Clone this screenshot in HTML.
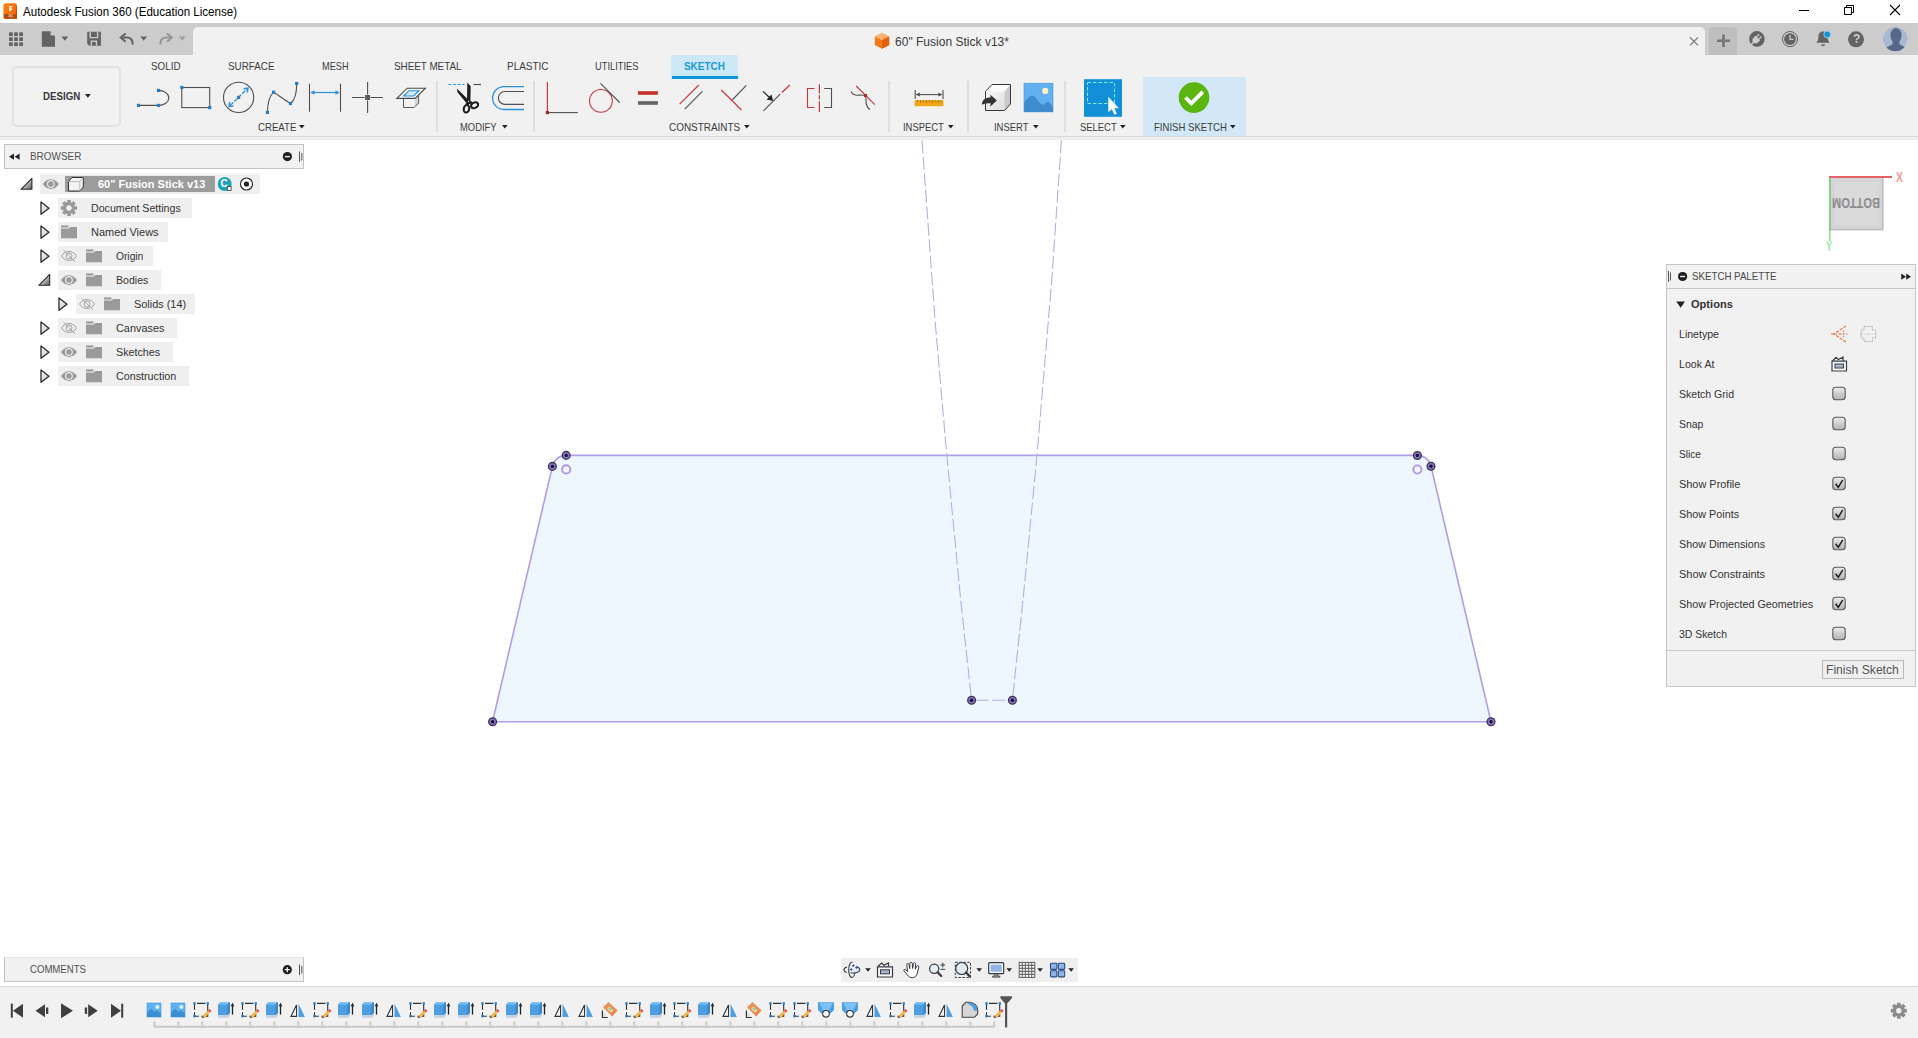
<!DOCTYPE html>
<html lang="en"><head><meta charset="utf-8"><title>Autodesk Fusion 360 (Education License)</title>
<style>
html,body{margin:0;padding:0;}
body{width:1918px;height:1038px;overflow:hidden;background:#fff;position:relative;font-family:"Liberation Sans",sans-serif;}
.b{position:absolute;box-sizing:border-box;display:block;}
.t{position:absolute;white-space:nowrap;font-family:"Liberation Sans",sans-serif;}
svg{overflow:visible;}
</style></head><body>
<div class="b" style="left:0px;top:23px;width:1918px;height:32px;background:#cccccc;"></div>
<div class="b" style="left:193px;top:27px;width:1512px;height:28px;background:#f1f1f1;border-radius:5px 5px 0 0;"></div>
<div class="b" style="left:1709px;top:27px;width:28px;height:28px;background:#bfbfbf;border-radius:4px 4px 0 0;"></div>
<div class="b" style="left:0px;top:55px;width:1918px;height:81px;background:#f1f1f1;"></div>
<div class="b" style="left:0px;top:136px;width:1918px;height:1px;background:#d9d9d9;"></div>
<div class="b" style="left:0px;top:137px;width:1918px;height:3px;background:#eeeeee;"></div>
<div class="b" style="left:0px;top:986px;width:1918px;height:52px;background:#f1f1f1;border-top:1px solid #d9d9d9;"></div>
<div class="t" style="left:23.10px;top:3.64px;font-size:12px;line-height:16px;color:#000;font-weight:400;transform:scaleX(0.9634);transform-origin:0 0;">Autodesk Fusion 360 (Education License)</div>
<div class="t" style="left:894.90px;top:33.64px;font-size:12px;line-height:16px;color:#3a3a3a;font-weight:400;transform:scaleX(1.0030);transform-origin:0 0;">60&quot; Fusion Stick v13*</div>
<div class="t" style="left:150.50px;top:58.69px;font-size:11px;line-height:15px;color:#3c3c3c;font-weight:400;transform:scaleX(0.8935);transform-origin:0 0;">SOLID</div>
<div class="t" style="left:228.30px;top:58.69px;font-size:11px;line-height:15px;color:#3c3c3c;font-weight:400;transform:scaleX(0.8950);transform-origin:0 0;">SURFACE</div>
<div class="t" style="left:321.50px;top:58.69px;font-size:11px;line-height:15px;color:#3c3c3c;font-weight:400;transform:scaleX(0.8338);transform-origin:0 0;">MESH</div>
<div class="t" style="left:394.40px;top:58.69px;font-size:11px;line-height:15px;color:#3c3c3c;font-weight:400;transform:scaleX(0.8953);transform-origin:0 0;">SHEET METAL</div>
<div class="t" style="left:507.30px;top:58.69px;font-size:11px;line-height:15px;color:#3c3c3c;font-weight:400;transform:scaleX(0.9052);transform-origin:0 0;">PLASTIC</div>
<div class="t" style="left:595.30px;top:58.69px;font-size:11px;line-height:15px;color:#3c3c3c;font-weight:400;transform:scaleX(0.8472);transform-origin:0 0;">UTILITIES</div>
<div class="b" style="left:671px;top:55px;width:67px;height:24px;background:#cde8f7;"></div>
<div class="b" style="left:672px;top:76px;width:66px;height:3px;background:#0a96d9;"></div>
<div class="t" style="left:684.00px;top:58.69px;font-size:11px;line-height:15px;color:#1b9ad6;font-weight:700;transform:scaleX(0.9023);transform-origin:0 0;">SKETCH</div>
<div class="b" style="left:1143px;top:77px;width:103px;height:59px;background:#d2e8f6;"></div>
<div class="b" style="left:11.5px;top:65.5px;width:109.5px;height:61px;border:2px solid #e2e2e2;border-radius:5px;background:#f2f2f2;"></div>
<div class="t" style="left:42.50px;top:88.99px;font-size:11px;line-height:15px;color:#3a3a3a;font-weight:700;transform:scaleX(0.8821);transform-origin:0 0;">DESIGN</div>
<div class="t" style="left:257.50px;top:119.69px;font-size:11px;line-height:15px;color:#3c3c3c;font-weight:400;transform:scaleX(0.8745);transform-origin:0 0;">CREATE</div>
<svg class="b" style="left:299px;top:124.5px;" width="6" height="4" viewBox="0 0 6 4"><path d="M0 0H5.6L2.8 3.6Z" fill="#222"/></svg>
<div class="t" style="left:460.40px;top:119.69px;font-size:11px;line-height:15px;color:#3c3c3c;font-weight:400;transform:scaleX(0.8555);transform-origin:0 0;">MODIFY</div>
<svg class="b" style="left:502.4px;top:124.5px;" width="6" height="4" viewBox="0 0 6 4"><path d="M0 0H5.6L2.8 3.6Z" fill="#222"/></svg>
<div class="t" style="left:669.40px;top:119.69px;font-size:11px;line-height:15px;color:#3c3c3c;font-weight:400;transform:scaleX(0.9031);transform-origin:0 0;">CONSTRAINTS</div>
<svg class="b" style="left:744.2px;top:124.5px;" width="6" height="4" viewBox="0 0 6 4"><path d="M0 0H5.6L2.8 3.6Z" fill="#222"/></svg>
<div class="t" style="left:903.20px;top:119.69px;font-size:11px;line-height:15px;color:#3c3c3c;font-weight:400;transform:scaleX(0.8538);transform-origin:0 0;">INSPECT</div>
<svg class="b" style="left:947.5px;top:124.5px;" width="6" height="4" viewBox="0 0 6 4"><path d="M0 0H5.6L2.8 3.6Z" fill="#222"/></svg>
<div class="t" style="left:994.40px;top:119.69px;font-size:11px;line-height:15px;color:#3c3c3c;font-weight:400;transform:scaleX(0.8570);transform-origin:0 0;">INSERT</div>
<svg class="b" style="left:1032.7px;top:124.5px;" width="6" height="4" viewBox="0 0 6 4"><path d="M0 0H5.6L2.8 3.6Z" fill="#222"/></svg>
<div class="t" style="left:1079.70px;top:119.69px;font-size:11px;line-height:15px;color:#3c3c3c;font-weight:400;transform:scaleX(0.8575);transform-origin:0 0;">SELECT</div>
<svg class="b" style="left:1120.3px;top:124.5px;" width="6" height="4" viewBox="0 0 6 4"><path d="M0 0H5.6L2.8 3.6Z" fill="#222"/></svg>
<div class="t" style="left:1153.60px;top:119.69px;font-size:11px;line-height:15px;color:#3c3c3c;font-weight:400;transform:scaleX(0.8694);transform-origin:0 0;">FINISH SKETCH</div>
<svg class="b" style="left:1230.3px;top:124.5px;" width="6" height="4" viewBox="0 0 6 4"><path d="M0 0H5.6L2.8 3.6Z" fill="#222"/></svg>
<svg class="b" style="left:84.5px;top:93.8px;" width="6" height="4" viewBox="0 0 6 4"><path d="M0 0H5.8L2.9 3.8Z" fill="#222"/></svg>
<div class="b" style="left:436px;top:81px;width:2px;height:51px;background:#dedede;"></div>
<div class="b" style="left:533px;top:81px;width:2px;height:51px;background:#dedede;"></div>
<div class="b" style="left:888px;top:81px;width:2px;height:51px;background:#dedede;"></div>
<div class="b" style="left:967px;top:81px;width:2px;height:51px;background:#dedede;"></div>
<div class="b" style="left:1064px;top:81px;width:2px;height:51px;background:#dedede;"></div>
<svg class="b" style="left:0px;top:0px;" width="1918" height="60" viewBox="0 0 1918 60"><defs><linearGradient id="gF" x1="0" y1="0" x2="1" y2="1"><stop offset="0" stop-color="#ff8212"/><stop offset="1" stop-color="#ee5e00"/></linearGradient></defs><path d="M6.200 3.200H15.200Q17 3.200 17 6V18.800H5Q3.400 18.800 3.400 17V6Q3.400 3.200 6.200 3.200Z" fill="url(#gF)"/><path d="M4 14H17V18.800H5Q4 18.800 4 17.500Z" fill="#b44a08"/><path d="M16.200 6.500L17 6V18.800H16.200Z" fill="#b85008"/><path d="M9.100 5.900h3.400v1.400h-1.900v1.300h1.700v1.300h-1.700v1.400H9.100z" fill="#fff6e0"/><text x="10.600" y="16.900" font-family="Liberation Sans, sans-serif" font-size="2.900" font-weight="700" fill="#f3d3bc" text-anchor="middle">360</text><rect x="9.0" y="32.2" width="3.8" height="3.8" rx="0.6" fill="#636363"/><rect x="14.1" y="32.2" width="3.8" height="3.8" rx="0.6" fill="#636363"/><rect x="19.2" y="32.2" width="3.8" height="3.8" rx="0.6" fill="#636363"/><rect x="9.0" y="37.2" width="3.8" height="3.8" rx="0.6" fill="#636363"/><rect x="14.1" y="37.2" width="3.8" height="3.8" rx="0.6" fill="#636363"/><rect x="19.2" y="37.2" width="3.8" height="3.8" rx="0.6" fill="#636363"/><rect x="9.0" y="42.3" width="3.8" height="3.8" rx="0.6" fill="#636363"/><rect x="14.1" y="42.3" width="3.8" height="3.8" rx="0.6" fill="#636363"/><rect x="19.2" y="42.3" width="3.8" height="3.8" rx="0.6" fill="#636363"/><path d="M41.8 31.2h8.4l4.8 4.8v10.7H41.8z" fill="#636363"/><path d="M50.6 31.2v4.4h4.4z" fill="#cccccc"/><path d="M51 31.6l3.6 3.6H51z" fill="#636363" opacity=".0"/><path d="M61.3 36.4h7l-3.5 4.4z" fill="#636363"/><path d="M87.200 31.700h13.700v14.100H89.400L87.200 43.600z" fill="#636363"/><path d="M90.200 31.700v5.900h7.400v-5.900" fill="none" stroke="#cccccc" stroke-width="1.400"/><path d="M91.300 45.800v-4.500h5.200v4.500" fill="none" stroke="#cccccc" stroke-width="1.400"/><path d="M121.3 37.6h5.4c3.6 0 6 2.6 6 6.9" fill="none" stroke="#636363" stroke-width="2"/><path d="M125.6 33.4l-4.9 4.2 4.9 4.2" fill="none" stroke="#636363" stroke-width="2"/><path d="M140.3 36.4h6.8l-3.4 4.4z" fill="#636363"/><path d="M170.9 37.6h-4.6c-3.6 0-6 2.6-6 6.9" fill="none" stroke="#969696" stroke-width="2"/><path d="M167 33.4l4.9 4.2-4.9 4.2" fill="none" stroke="#969696" stroke-width="2"/><path d="M178.9 36.4h6.8l-3.4 4.4z" fill="#a0a0a0"/><path d="M1799 10.5h10" stroke="#000" stroke-width="1"/><path d="M1844.5 7.5h7v7h-7zM1846.5 7.5v-2h7v7h-2" fill="none" stroke="#000" stroke-width="1"/><path d="M1890 5l10 10M1900 5l-10 10" stroke="#000" stroke-width="1.1"/><path d="M882 33l7.2 3.6v8.4l-7.2 3.8-7.2-3.8v-8.4z" fill="#f47a1a"/><path d="M882 33l7.2 3.6-7.2 3.6-7.2-3.6z" fill="#fbb272"/><path d="M882 40.2l7.2-3.6v8.4l-7.2 3.8z" fill="#e0600c"/><path d="M1690 37.4l8 8M1698 37.4l-8 8" stroke="#777" stroke-width="1.3"/><path d="M1717 40.8h13M1723.5 34.6v12.4" stroke="#777" stroke-width="2.6"/><circle cx="1756.900" cy="38.900" r="7.800" fill="#636363"/><g transform="rotate(45 1756.500 39.300)" fill="#cccccc"><path d="M1753.300 37.300h6.400v3.200a3.200 3.200 0 0 1-6.400 0z"/><rect x="1754.300" y="33.800" width="1.300" height="3.600"/><rect x="1757.400" y="33.800" width="1.300" height="3.600"/><rect x="1755.800" y="43" width="1.500" height="4.500"/></g><circle cx="1790" cy="39.1" r="7.6" fill="none" stroke="#636363" stroke-width="1"/><circle cx="1790" cy="39.1" r="5.900" fill="#636363"/><path d="M1790 35v4.400h3.600" fill="none" stroke="#ccc" stroke-width="1.2"/><path d="M1823 31.6c3.200 0 4.600 2.400 4.600 5.400 0 3 .8 4.400 2.200 5.800h-13.600c1.400-1.400 2.200-2.800 2.200-5.800 0-3 1.400-5.400 4.600-5.400z" fill="#636363"/><path d="M1821 44.400h4a2 1.800 0 0 1-4 0z" fill="#636363"/><circle cx="1827.200" cy="34.400" r="3.400" fill="#1590d8" stroke="#a8d4f0" stroke-width=".800"/><circle cx="1856" cy="39.300" r="8" fill="#636363"/><circle cx="1895.300" cy="39.100" r="12.200" fill="#a8b7d2"/><clipPath id="cav"><circle cx="1895.300" cy="39.100" r="12.200"/></clipPath><g clip-path="url(#cav)" fill="#566789"><ellipse cx="1896" cy="35.500" rx="5.600" ry="7.400"/><path d="M1884.500 52c1-5 5-6.500 8-7.500v-3h7v3c3 1 7 2.500 8 7.500z"/></g></svg>
<div class="t" style="left:1853.00px;top:31.44px;font-size:12px;line-height:16px;color:#cccccc;font-weight:700;">?</div>
<svg class="b" style="left:0px;top:0px;" width="1918" height="140" viewBox="0 0 1918 140"><path d="M138.5 105.4H158.500A10.300 7.500 0 0 0 158.500 90.400" fill="none" stroke="#505050" stroke-width="1.100"/><rect x="136.9" y="103.8" width="3.2" height="3.2" fill="#2a7cc0"/><rect x="156.9" y="103.8" width="3.2" height="3.2" fill="#2a7cc0"/><rect x="156.9" y="88.8" width="3.2" height="3.2" fill="#2a7cc0"/><rect x="181.800" y="87.500" width="27.900" height="20.100" fill="none" stroke="#505050" stroke-width="1.100"/><rect x="180.2" y="85.9" width="3.2" height="3.2" fill="#2a7cc0"/><rect x="208.1" y="106.0" width="3.2" height="3.2" fill="#2a7cc0"/><circle cx="238.600" cy="97.400" r="15.100" fill="none" stroke="#505050" stroke-width="1.100"/><path d="M230.300 105.400L246.800 89.300" stroke="#2b8fd9" stroke-width="1.400" stroke-dasharray="4 1.600"/><path d="M243.700 88.700L247.900 88.200L247.300 92.500M233.400 106L229.100 106.500L229.700 102.200" fill="none" stroke="#2b8fd9" stroke-width="1.500"/><rect x="237.0" y="95.8" width="3.2" height="3.2" fill="#2a7cc0"/><path d="M267.400 112.400C267.600 103 270 95.500 273.600 92.200C279 95.200 285 100.500 290.500 103.500C294.500 100.500 296.700 92 296.700 83.500" fill="none" stroke="#505050" stroke-width="1.100"/><rect x="265.8" y="110.8" width="3.2" height="3.2" fill="#2a7cc0"/><rect x="272.0" y="90.6" width="3.2" height="3.2" fill="#2a7cc0"/><rect x="288.9" y="101.9" width="3.2" height="3.2" fill="#2a7cc0"/><rect x="295.1" y="81.9" width="3.2" height="3.2" fill="#2a7cc0"/><path d="M309.500 83.700V111.700M340.500 83.700V111.700" stroke="#505050" stroke-width="1.100"/><path d="M311.500 92.500H338.500" stroke="#2b8fd9" stroke-width="1.200"/><path d="M310.300 92.500l4.200-2.200v4.400zM339.700 92.500l-4.200-2.200v4.400z" fill="#2b8fd9"/><path d="M352 97.500H364.500M370.700 97.500H383M367.600 82V94.400M367.600 100.600V113" stroke="#505050" stroke-width="1.100"/><rect x="365.1" y="95.0" width="5.0" height="5.0" fill="#5a5a5a"/><path d="M403.500 98.400V107.500H414.200V98.400Z" fill="#f2f2f2"/><path d="M414.200 107.500L418.800 103.300V95L414.200 98.400Z" fill="#d6d6d6"/><path d="M403.500 98.400V107.500H414.200L418.600 103V95" fill="none" stroke="#5a5a5a" stroke-width="1"/><path d="M414.200 107V98.400" stroke="#fafafa" stroke-width=".800"/><path d="M396.900 98.400L407.200 88.200H425.400L415.200 98.400Z" fill="#fafafa" stroke="#484848" stroke-width="1.100"/><path d="M403.700 96L408.900 90.700H419L413.900 96Z" fill="#cfe9fb" stroke="#2b8fd9" stroke-width="1.150"/><path d="M448.500 84.500H464.500" stroke="#2b8fd9" stroke-width="1.200" stroke-dasharray="3 1.600"/><path d="M473.500 84.500H481" stroke="#505050" stroke-width="1.100"/><path d="M467.300 82.600L470.700 86.300L470.400 100.800L468.600 105.400L465.600 104.600L467 100Z" fill="#1e1e1e"/><path d="M456.800 88.600L468.100 99.500L472.800 102.300L471 104.800L465.900 102.500L457.500 92.200Z" fill="#1e1e1e"/><ellipse cx="466.500" cy="108.800" rx="2.700" ry="3.800" fill="none" stroke="#1e1e1e" stroke-width="2.100" transform="rotate(12 466.500 108.800)"/><ellipse cx="474.600" cy="105.300" rx="3.700" ry="2.700" fill="none" stroke="#1e1e1e" stroke-width="2.100" transform="rotate(-28 474.600 105.300)"/><circle cx="468.500" cy="101.400" r=".700" fill="#e8e8e8"/><path d="M524 86.600H504.050A11.450 11.450 0 0 0 504.050 109.500H524" fill="none" stroke="#2b8fd9" stroke-width="1.300"/><path d="M524 91.500H504.850A6.450 6.450 0 0 0 504.850 104.400H524" fill="none" stroke="#505050" stroke-width="1.100"/><path d="M547.400 82V111" stroke="#c43a42" stroke-width="1.200"/><path d="M549 112.600H577.800" stroke="#505050" stroke-width="1.100"/><rect x="545.8" y="111.0" width="3.2" height="3.2" fill="#a02828"/><circle cx="600.900" cy="100.900" r="11.400" fill="none" stroke="#c43a42" stroke-width="1.100"/><path d="M600.400 83.400L619.700 102.500" stroke="#505050" stroke-width="1.100"/><rect x="638" y="91.200" width="19.900" height="3.600" fill="#c9302c"/><rect x="638" y="101.200" width="19.900" height="3.600" fill="#636363"/><path d="M679.600 104.200L698.800 85" stroke="#c43a42" stroke-width="1.200"/><path d="M684.800 109.200L702.300 91.400" stroke="#505050" stroke-width="1.100"/><path d="M721.300 90L741.500 110" stroke="#c43a42" stroke-width="1.200"/><path d="M732.200 100L746.300 85.400" stroke="#505050" stroke-width="1.100"/><path d="M763.500 110.900L780.200 94.200" stroke="#505050" stroke-width="1.100"/><path d="M781.900 92.500L789.900 85" stroke="#c43a42" stroke-width="1.300"/><path d="M763 91.400L770 98" stroke="#222" stroke-width="1.200"/><path d="M773.200 101L766.600 99.400L771.400 94.600Z" fill="#222"/><path d="M814.600 88.500H807.500V107.500H814.600" fill="none" stroke="#c43a42" stroke-width="1.100"/><path d="M824.100 88.500H831.500V107.500H824.100" fill="none" stroke="#505050" stroke-width="1.100"/><path d="M819.400 84.200V112" stroke="#c43a42" stroke-width="1.200" stroke-dasharray="9.200 1.800 4.400 1.600 11 0"/><path d="M851.100 91.500C852.500 94.800 855 95.200 857.500 95.200S862 94.600 865.300 95.500C866.800 98 865.500 101 866.300 104S868 108.600 869.900 109.400" fill="none" stroke="#505050" stroke-width="1.100"/><path d="M856.200 86L874.800 104.600" stroke="#c43a42" stroke-width="1.200"/><rect x="864.0" y="94.0" width="3.0" height="3.0" fill="#a82a34"/><path d="M915.200 90V99M943 90V99" stroke="#505050" stroke-width="1.100"/><path d="M916.500 94.600H941.500" stroke="#505050" stroke-width="1.100"/><path d="M915.800 94.600l4-2v4zM942.400 94.600l-4-2v4z" fill="#505050"/><rect x="914.700" y="100.200" width="28.700" height="6" fill="#f2a516"/><rect x="917.0" y="100.200" width="1" height="1.8" fill="#a86a08"/><rect x="920.0" y="100.200" width="1" height="2.6" fill="#a86a08"/><rect x="922.9" y="100.200" width="1" height="1.8" fill="#a86a08"/><rect x="925.9" y="100.200" width="1" height="2.6" fill="#a86a08"/><rect x="928.8" y="100.200" width="1" height="1.8" fill="#a86a08"/><rect x="931.8" y="100.200" width="1" height="2.6" fill="#a86a08"/><rect x="934.7" y="100.200" width="1" height="1.8" fill="#a86a08"/><rect x="937.6" y="100.200" width="1" height="2.6" fill="#a86a08"/><rect x="940.6" y="100.200" width="1" height="1.8" fill="#a86a08"/><defs><linearGradient id="gCubeF" x1="0" y1="0" x2="1" y2="1"><stop offset="0" stop-color="#f6f6f6"/><stop offset="1" stop-color="#dedede"/></linearGradient></defs><path d="M985.500 91.400H1004.500V110.500H985.500Z" fill="url(#gCubeF)"/><path d="M985.500 91.400L992 84.500H1010.500L1004.500 91.400Z" fill="#fbfbfb"/><path d="M1004.500 91.400L1010.500 84.500V104L1004.500 110.500Z" fill="#c9c9cd"/><path d="M985.500 91.400L992 84.500H1010.500V104L1004.500 110.500H985.500Z" fill="none" stroke="#3a3a3a" stroke-width="1" stroke-linejoin="round"/><path d="M981.800 104.800C982.500 99.500 985.500 97.600 990.500 97.600V94.800L996.900 100.600L990.500 106.400V103.200C987 103.200 984.500 103.200 981.800 104.800Z" fill="#333"/><rect x="1024" y="83.200" width="29" height="28.700" fill="#62b0f0"/><path d="M1024 102.500C1027 99 1029.500 95.400 1032.400 95.400C1036 95.400 1039.500 104.700 1043.200 104.700C1045 104.700 1046 101.800 1047.600 101.800C1049.500 101.800 1051.500 105 1053 107.500V111.900H1024Z" fill="#3f8ccc"/><circle cx="1045.200" cy="90.900" r="3.100" fill="#fdf3c4"/><rect x="1024" y="83.200" width="29" height="28.700" fill="none" stroke="#4a94d4" stroke-width=".600"/><rect x="1084" y="79.200" width="38" height="37.600" fill="#1190d8"/><rect x="1087.500" y="82.500" width="27" height="21" fill="none" stroke="#86ead8" stroke-width="1" stroke-dasharray="3.500 2"/><path d="M1108.300 96.800V112.300L1111.800 109.200L1114.400 114.700L1116.800 113.600L1114.300 108.200H1118.900Z" fill="#fff"/><circle cx="1194" cy="97.600" r="15.300" fill="#5bb511"/><path d="M1185.500 97.500L1191.300 103.300L1202.800 91.800" fill="none" stroke="#fff" stroke-width="3.800"/></svg>
<div class="b" style="left:4px;top:144px;width:300px;height:25px;background:#f1f1f1;border:1px solid #c3c3c3;"></div>
<div class="t" style="left:29.50px;top:148.69px;font-size:11px;line-height:15px;color:#505050;font-weight:400;transform:scaleX(0.9025);transform-origin:0 0;">BROWSER</div>
<div class="b" style="left:40px;top:174px;width:220px;height:20px;background:#efefef;"></div>
<div class="b" style="left:65px;top:176px;width:150px;height:16px;background:#9c9c9c;"></div>
<div class="b" style="left:58px;top:198px;width:134px;height:20px;background:#efefef;"></div>
<div class="t" style="left:91.20px;top:200.99px;font-size:11px;line-height:15px;color:#333;font-weight:400;transform:scaleX(0.9652);transform-origin:0 0;">Document Settings</div>
<div class="b" style="left:58px;top:222px;width:110px;height:20px;background:#efefef;"></div>
<div class="t" style="left:91.20px;top:224.99px;font-size:11px;line-height:15px;color:#333;font-weight:400;transform:scaleX(0.9992);transform-origin:0 0;">Named Views</div>
<div class="b" style="left:58px;top:246px;width:95px;height:20px;background:#efefef;"></div>
<div class="t" style="left:116.20px;top:248.99px;font-size:11px;line-height:15px;color:#333;font-weight:400;transform:scaleX(0.9304);transform-origin:0 0;">Origin</div>
<div class="b" style="left:58px;top:270px;width:103px;height:20px;background:#efefef;"></div>
<div class="t" style="left:116.20px;top:272.99px;font-size:11px;line-height:15px;color:#333;font-weight:400;transform:scaleX(0.9601);transform-origin:0 0;">Bodies</div>
<div class="b" style="left:76px;top:294px;width:119px;height:20px;background:#efefef;"></div>
<div class="t" style="left:134.20px;top:296.99px;font-size:11px;line-height:15px;color:#333;font-weight:400;transform:scaleX(0.9909);transform-origin:0 0;">Solids (14)</div>
<div class="b" style="left:58px;top:318px;width:119px;height:20px;background:#efefef;"></div>
<div class="t" style="left:116.20px;top:320.99px;font-size:11px;line-height:15px;color:#333;font-weight:400;transform:scaleX(0.9893);transform-origin:0 0;">Canvases</div>
<div class="b" style="left:58px;top:342px;width:115px;height:20px;background:#efefef;"></div>
<div class="t" style="left:116.20px;top:344.99px;font-size:11px;line-height:15px;color:#333;font-weight:400;transform:scaleX(0.9768);transform-origin:0 0;">Sketches</div>
<div class="b" style="left:58px;top:366px;width:130.5px;height:20px;background:#efefef;"></div>
<div class="t" style="left:116.20px;top:368.99px;font-size:11px;line-height:15px;color:#333;font-weight:400;transform:scaleX(0.9749);transform-origin:0 0;">Construction</div>
<svg class="b" style="left:0px;top:0px;" width="320" height="400" viewBox="0 0 320 400"><path d="M14 153.600V159.800L9 156.700ZM19.600 153.600V159.800L14.600 156.700Z" fill="#222"/><circle cx="287.400" cy="156.600" r="4.600" fill="#1e1e1e"/><rect x="284.900" y="155.900" width="5" height="1.400" fill="#f1f1f1"/><path d="M299.500 151.500V162M301.800 153V160.500" stroke="#555" stroke-width="1"/><defs><linearGradient id="gTri" x1="0" y1="0" x2="1" y2="1"><stop offset="0" stop-color="#fff"/><stop offset="1" stop-color="#bdbdbd"/></linearGradient><linearGradient id="gTri2" x1="0" y1="0" x2="1" y2="1"><stop offset=".3" stop-color="#e8e8e8"/><stop offset="1" stop-color="#555"/></linearGradient></defs><path d="M21.0 189.3H31.9V178.4Z" fill="url(#gTri2)" stroke="#2a2a2a" stroke-width="1.100" stroke-linejoin="round"/><path d="M42.8 184.0C46.8 177.5 54.8 177.5 58.8 184.0C54.8 190.5 46.8 190.5 42.8 184.0Z" fill="#9a9a9a"/><circle cx="50.8" cy="184.0" r="3.300" fill="none" stroke="#e4e4e4" stroke-width="1.300"/><path d="M68.500 181.500L72 177.500H83.300V187L79.800 191H68.500Z" fill="#f4f4f4" stroke="#333" stroke-width="1"/><path d="M68.500 181.500H79.800V191M79.800 181.500L83.300 177.500" fill="none" stroke="#bbb" stroke-width="1"/><circle cx="224.700" cy="184" r="7" fill="#1ba3b8"/><rect x="227.300" y="186.600" width="3.800" height="3.800" fill="#fff" stroke="#333" stroke-width=".800"/><circle cx="246.500" cy="184" r="6" fill="#fff" stroke="#222" stroke-width="1.100"/><circle cx="246.500" cy="184" r="2.600" fill="#222"/><path d="M41.0 202.0L49.0 208.2L41.0 214.3Z" fill="url(#gTri)" stroke="#2a2a2a" stroke-width="1.300" stroke-linejoin="round"/><rect x="67.2" y="200.0" width="3.600" height="4" fill="#9a9a9a" transform="rotate(0 69.0 208.0)"/><rect x="67.2" y="200.0" width="3.600" height="4" fill="#9a9a9a" transform="rotate(45 69.0 208.0)"/><rect x="67.2" y="200.0" width="3.600" height="4" fill="#9a9a9a" transform="rotate(90 69.0 208.0)"/><rect x="67.2" y="200.0" width="3.600" height="4" fill="#9a9a9a" transform="rotate(135 69.0 208.0)"/><rect x="67.2" y="200.0" width="3.600" height="4" fill="#9a9a9a" transform="rotate(180 69.0 208.0)"/><rect x="67.2" y="200.0" width="3.600" height="4" fill="#9a9a9a" transform="rotate(225 69.0 208.0)"/><rect x="67.2" y="200.0" width="3.600" height="4" fill="#9a9a9a" transform="rotate(270 69.0 208.0)"/><rect x="67.2" y="200.0" width="3.600" height="4" fill="#9a9a9a" transform="rotate(315 69.0 208.0)"/><circle cx="69.0" cy="208.0" r="4.400" fill="none" stroke="#9a9a9a" stroke-width="3.400"/><path d="M41.0 226.0L49.0 232.2L41.0 238.3Z" fill="url(#gTri)" stroke="#2a2a2a" stroke-width="1.300" stroke-linejoin="round"/><path d="M61.0 225.4h7.400v2.100h-7.400z" fill="#9a9a9a"/><path d="M61.0 228.5h7.700l1.500-1.500h6.800v11.200h-16z" fill="#9a9a9a"/><path d="M41.0 250.0L49.0 256.2L41.0 262.3Z" fill="url(#gTri)" stroke="#2a2a2a" stroke-width="1.300" stroke-linejoin="round"/><path d="M61.5 256.0C65.0 250.0 73.0 250.0 76.5 256.0C73.0 262.0 65.0 262.0 61.5 256.0Z" fill="none" stroke="#a4a4a4" stroke-width="1"/><circle cx="69.0" cy="256.0" r="3" fill="none" stroke="#a4a4a4" stroke-width="1"/><path d="M64.0 250.5L75.0 262.0" stroke="#a4a4a4" stroke-width="1"/><path d="M86.0 249.4h7.400v2.100h-7.400z" fill="#9a9a9a"/><path d="M86.0 252.5h7.700l1.500-1.500h6.800v11.200h-16z" fill="#9a9a9a"/><path d="M38.8 285.3H49.7V274.4Z" fill="url(#gTri2)" stroke="#2a2a2a" stroke-width="1.100" stroke-linejoin="round"/><path d="M61.0 280.0C65.0 273.5 73.0 273.5 77.0 280.0C73.0 286.5 65.0 286.5 61.0 280.0Z" fill="#9a9a9a"/><circle cx="69.0" cy="280.0" r="3.300" fill="none" stroke="#e4e4e4" stroke-width="1.300"/><path d="M86.0 273.4h7.400v2.100h-7.400z" fill="#9a9a9a"/><path d="M86.0 276.5h7.700l1.500-1.500h6.800v11.200h-16z" fill="#9a9a9a"/><path d="M59.0 298.0L67.0 304.2L59.0 310.3Z" fill="url(#gTri)" stroke="#2a2a2a" stroke-width="1.300" stroke-linejoin="round"/><path d="M79.5 304.0C83.0 298.0 91.0 298.0 94.5 304.0C91.0 310.0 83.0 310.0 79.5 304.0Z" fill="none" stroke="#a4a4a4" stroke-width="1"/><circle cx="87.0" cy="304.0" r="3" fill="none" stroke="#a4a4a4" stroke-width="1"/><path d="M82.0 298.5L93.0 310.0" stroke="#a4a4a4" stroke-width="1"/><path d="M104.0 297.4h7.400v2.100h-7.400z" fill="#9a9a9a"/><path d="M104.0 300.5h7.700l1.500-1.500h6.800v11.200h-16z" fill="#9a9a9a"/><path d="M41.0 322.0L49.0 328.2L41.0 334.3Z" fill="url(#gTri)" stroke="#2a2a2a" stroke-width="1.300" stroke-linejoin="round"/><path d="M61.5 328.0C65.0 322.0 73.0 322.0 76.5 328.0C73.0 334.0 65.0 334.0 61.5 328.0Z" fill="none" stroke="#a4a4a4" stroke-width="1"/><circle cx="69.0" cy="328.0" r="3" fill="none" stroke="#a4a4a4" stroke-width="1"/><path d="M64.0 322.5L75.0 334.0" stroke="#a4a4a4" stroke-width="1"/><path d="M86.0 321.4h7.400v2.100h-7.400z" fill="#9a9a9a"/><path d="M86.0 324.5h7.700l1.500-1.500h6.800v11.200h-16z" fill="#9a9a9a"/><path d="M41.0 346.0L49.0 352.2L41.0 358.3Z" fill="url(#gTri)" stroke="#2a2a2a" stroke-width="1.300" stroke-linejoin="round"/><path d="M61.0 352.0C65.0 345.5 73.0 345.5 77.0 352.0C73.0 358.5 65.0 358.5 61.0 352.0Z" fill="#9a9a9a"/><circle cx="69.0" cy="352.0" r="3.300" fill="none" stroke="#e4e4e4" stroke-width="1.300"/><path d="M86.0 345.4h7.400v2.100h-7.400z" fill="#9a9a9a"/><path d="M86.0 348.5h7.700l1.500-1.500h6.800v11.200h-16z" fill="#9a9a9a"/><path d="M41.0 370.0L49.0 376.2L41.0 382.3Z" fill="url(#gTri)" stroke="#2a2a2a" stroke-width="1.300" stroke-linejoin="round"/><path d="M61.0 376.0C65.0 369.5 73.0 369.5 77.0 376.0C73.0 382.5 65.0 382.5 61.0 376.0Z" fill="#9a9a9a"/><circle cx="69.0" cy="376.0" r="3.300" fill="none" stroke="#e4e4e4" stroke-width="1.300"/><path d="M86.0 369.4h7.400v2.100h-7.400z" fill="#9a9a9a"/><path d="M86.0 372.5h7.700l1.500-1.500h6.800v11.200h-16z" fill="#9a9a9a"/></svg>
<div class="t" style="left:98.30px;top:176.69px;font-size:11px;line-height:15px;color:#fff;font-weight:700;transform:scaleX(0.9999);transform-origin:0 0;">60&quot; Fusion Stick v13</div>
<div class="t" style="left:220.60px;top:177.34px;font-size:10px;line-height:14px;color:#fff;font-weight:700;">C</div>
<svg class="b" style="left:0px;top:0px;" width="1918" height="1038" viewBox="0 0 1918 1038"><path d="M492.500 721.800L552.400 466.400A14 14 0 0 1 566.200 455.400H1417.400A14 14 0 0 1 1431 466.300L1491 721.800Z" fill="#eff7fe" stroke="#b09ee4" stroke-width="1.600" stroke-linejoin="round"/><path d="M922 140.500L932.100 280L935 320L946.800 455.300L960.700 600L971.600 700.250" fill="none" stroke="#b5b0dc" stroke-width="1.100" stroke-dasharray="13 3.500"/><path d="M1061.400 140.500L1051.800 280L1048.400 320L1037 455.300L1023 600L1012.400 700.250" fill="none" stroke="#b5b0dc" stroke-width="1.100" stroke-dasharray="13 3.500"/><path d="M971.600 700.250H1012.400" stroke="#b5b0dc" stroke-width="1.100" stroke-dasharray="13 3.500" stroke-dashoffset="-4"/><circle cx="566.20" cy="469.40" r="4.100" fill="#f8f4ff" stroke="#ab96ea" stroke-width="1.900"/><circle cx="1417.40" cy="469.50" r="4.100" fill="#f8f4ff" stroke="#ab96ea" stroke-width="1.900"/><circle cx="492.60" cy="721.80" r="3.900" fill="#8774c2" stroke="#3c3450" stroke-width="1.300"/><circle cx="492.60" cy="721.80" r="1.700" fill="#1c0c38"/><circle cx="1491.00" cy="721.80" r="3.900" fill="#8774c2" stroke="#3c3450" stroke-width="1.300"/><circle cx="1491.00" cy="721.80" r="1.700" fill="#1c0c38"/><circle cx="552.40" cy="466.40" r="3.900" fill="#8774c2" stroke="#3c3450" stroke-width="1.300"/><circle cx="552.40" cy="466.40" r="1.700" fill="#1c0c38"/><circle cx="566.20" cy="455.40" r="3.900" fill="#8774c2" stroke="#3c3450" stroke-width="1.300"/><circle cx="566.20" cy="455.40" r="1.700" fill="#1c0c38"/><circle cx="1417.40" cy="455.50" r="3.900" fill="#8774c2" stroke="#3c3450" stroke-width="1.300"/><circle cx="1417.40" cy="455.50" r="1.700" fill="#1c0c38"/><circle cx="1431.00" cy="466.30" r="3.900" fill="#8774c2" stroke="#3c3450" stroke-width="1.300"/><circle cx="1431.00" cy="466.30" r="1.700" fill="#1c0c38"/><circle cx="971.60" cy="700.25" r="3.900" fill="#8774c2" stroke="#3c3450" stroke-width="1.300"/><circle cx="971.60" cy="700.25" r="1.700" fill="#1c0c38"/><circle cx="1012.40" cy="700.25" r="3.900" fill="#8774c2" stroke="#3c3450" stroke-width="1.300"/><circle cx="1012.40" cy="700.25" r="1.700" fill="#1c0c38"/></svg>
<svg class="b" style="left:0px;top:0px;" width="1918" height="260" viewBox="0 0 1918 260"><rect x="1830.500" y="177" width="52.500" height="52.800" fill="#d5d5d5" stroke="#a9a9a9" stroke-width="1"/><rect x="1835" y="182" width="43.500" height="43" fill="#dadada"/><path d="M1829.700 177V241" stroke="#76e086" stroke-width="1.400"/><path d="M1829 177H1892" stroke="#e26464" stroke-width="1.800"/></svg>
<div class="t" style="left:1896.00px;top:167.75px;font-size:14px;line-height:18px;color:#f09a9a;font-weight:700;transform:scaleX(0.7492);transform-origin:0 0;">X</div>
<div class="t" style="left:1826.40px;top:237.45px;font-size:14px;line-height:18px;color:#98eca8;font-weight:700;transform:scaleX(0.6635);transform-origin:0 0;">Y</div>
<div class="t" style="left:1832.400px;top:195px;width:48px;height:16px;font-size:14px;line-height:16px;color:#8c8c8c;font-weight:700;transform:rotate(180deg);"><span style="display:inline-block;transform:scaleX(0.7947);transform-origin:0 0;">BOTTOM</span></div>
<div class="b" style="left:1666px;top:264px;width:250px;height:423px;background:#f1f1f1;border:1px solid #c6c6c6;"></div>
<div class="b" style="left:1667px;top:288px;width:248px;height:1px;background:#c6c6c6;"></div>
<div class="b" style="left:1667px;top:650px;width:248px;height:1px;background:#c6c6c6;"></div>
<div class="t" style="left:1691.60px;top:268.99px;font-size:11px;line-height:15px;color:#484848;font-weight:400;transform:scaleX(0.8834);transform-origin:0 0;">SKETCH PALETTE</div>
<div class="t" style="left:1691.30px;top:297.49px;font-size:11px;line-height:15px;color:#333;font-weight:700;transform:scaleX(1.0061);transform-origin:0 0;">Options</div>
<div class="t" style="left:1679.10px;top:326.69px;font-size:11px;line-height:15px;color:#333;font-weight:400;transform:scaleX(0.9617);transform-origin:0 0;">Linetype</div>
<div class="t" style="left:1679.10px;top:356.69px;font-size:11px;line-height:15px;color:#333;font-weight:400;transform:scaleX(0.9672);transform-origin:0 0;">Look At</div>
<div class="t" style="left:1679.10px;top:386.69px;font-size:11px;line-height:15px;color:#333;font-weight:400;transform:scaleX(0.9570);transform-origin:0 0;">Sketch Grid</div>
<div class="t" style="left:1679.10px;top:416.69px;font-size:11px;line-height:15px;color:#333;font-weight:400;transform:scaleX(0.9460);transform-origin:0 0;">Snap</div>
<div class="t" style="left:1679.10px;top:446.69px;font-size:11px;line-height:15px;color:#333;font-weight:400;transform:scaleX(0.9227);transform-origin:0 0;">Slice</div>
<div class="t" style="left:1679.10px;top:476.69px;font-size:11px;line-height:15px;color:#333;font-weight:400;transform:scaleX(0.9927);transform-origin:0 0;">Show Profile</div>
<div class="t" style="left:1679.10px;top:506.69px;font-size:11px;line-height:15px;color:#333;font-weight:400;transform:scaleX(0.9830);transform-origin:0 0;">Show Points</div>
<div class="t" style="left:1679.10px;top:536.69px;font-size:11px;line-height:15px;color:#333;font-weight:400;transform:scaleX(0.9781);transform-origin:0 0;">Show Dimensions</div>
<div class="t" style="left:1679.10px;top:566.69px;font-size:11px;line-height:15px;color:#333;font-weight:400;transform:scaleX(0.9988);transform-origin:0 0;">Show Constraints</div>
<div class="t" style="left:1679.10px;top:596.69px;font-size:11px;line-height:15px;color:#333;font-weight:400;transform:scaleX(0.9792);transform-origin:0 0;">Show Projected Geometries</div>
<div class="t" style="left:1679.10px;top:626.69px;font-size:11px;line-height:15px;color:#333;font-weight:400;transform:scaleX(0.9458);transform-origin:0 0;">3D Sketch</div>
<svg class="b" style="left:0px;top:0px;" width="1918" height="700" viewBox="0 0 1918 700"><path d="M1668.500 271V282M1670.500 272.500V280.500" stroke="#555" stroke-width="1"/><circle cx="1682.600" cy="276.500" r="4.600" fill="#1e1e1e"/><rect x="1680.100" y="275.800" width="5" height="1.400" fill="#f1f1f1"/><path d="M1901.200 273.600V279.800L1906 276.700ZM1906.200 273.600V279.800L1911 276.700Z" fill="#222"/><path d="M1676.300 301.600H1685L1680.650 307.800Z" fill="#222"/><defs><linearGradient id="gCb" x1="0" y1="0" x2="0" y2="1"><stop offset="0" stop-color="#ececec"/><stop offset="1" stop-color="#b2b2b2"/></linearGradient></defs><rect x="1832.800" y="387.3" width="12.400" height="12.400" rx="3" fill="url(#gCb)" stroke="#5a5a5a" stroke-width="1.100"/><rect x="1832.800" y="417.3" width="12.400" height="12.400" rx="3" fill="url(#gCb)" stroke="#5a5a5a" stroke-width="1.100"/><rect x="1832.800" y="447.3" width="12.400" height="12.400" rx="3" fill="url(#gCb)" stroke="#5a5a5a" stroke-width="1.100"/><rect x="1832.800" y="477.3" width="12.400" height="12.400" rx="3" fill="url(#gCb)" stroke="#5a5a5a" stroke-width="1.100"/><path d="M1835.600 483.7L1838.300 487.2L1842.800 479.8" fill="none" stroke="#1a1a1a" stroke-width="1.400"/><rect x="1832.800" y="507.3" width="12.400" height="12.400" rx="3" fill="url(#gCb)" stroke="#5a5a5a" stroke-width="1.100"/><path d="M1835.600 513.7L1838.300 517.2L1842.800 509.8" fill="none" stroke="#1a1a1a" stroke-width="1.400"/><rect x="1832.800" y="537.3" width="12.400" height="12.400" rx="3" fill="url(#gCb)" stroke="#5a5a5a" stroke-width="1.100"/><path d="M1835.600 543.7L1838.300 547.2L1842.800 539.8" fill="none" stroke="#1a1a1a" stroke-width="1.400"/><rect x="1832.800" y="567.3" width="12.400" height="12.400" rx="3" fill="url(#gCb)" stroke="#5a5a5a" stroke-width="1.100"/><path d="M1835.600 573.7L1838.300 577.2L1842.800 569.8" fill="none" stroke="#1a1a1a" stroke-width="1.400"/><rect x="1832.800" y="597.3" width="12.400" height="12.400" rx="3" fill="url(#gCb)" stroke="#5a5a5a" stroke-width="1.100"/><path d="M1835.600 603.7L1838.300 607.2L1842.800 599.8" fill="none" stroke="#1a1a1a" stroke-width="1.400"/><rect x="1832.800" y="627.3" width="12.400" height="12.400" rx="3" fill="url(#gCb)" stroke="#5a5a5a" stroke-width="1.100"/><path d="M1831 334H1847.500" stroke="#e0703a" stroke-width="1" stroke-dasharray="3.500 1.500 1 1.500"/><path d="M1846 326L1834 334L1846 342" fill="none" stroke="#e0703a" stroke-width="1.100" stroke-dasharray="3 1.300"/><path d="M1843.500 330.500V337.500" stroke="#e0703a" stroke-width="1" stroke-dasharray="1.500 1"/><path d="M1864 326.500H1872.500V330H1875.500V338H1872.500V341.500H1864V338H1861V330H1864Z" fill="none" stroke="#b8b8b8" stroke-width="1" stroke-dasharray="2.600 .900"/><path d="M1860 334H1876.500" stroke="#c8c8c8" stroke-width="1" stroke-dasharray="3 1.500 1 1.500"/><path d="M1832 361.200H1846.500V371H1832Z" fill="#f6f6f6" stroke="#3a3f4a" stroke-width="1.200"/><rect x="1835" y="364" width="8.500" height="4" fill="#aab4cc" stroke="#3a3f4a" stroke-width="1"/><path d="M1832.500 361L1836 357.300L1838.500 359.500L1843 357V361" fill="none" stroke="#3a3f4a" stroke-width="1.200"/></svg>
<div class="b" style="left:1822px;top:660px;width:82px;height:19px;background:#efefef;border:1px solid #b9b9b9;"></div>
<div class="t" style="left:1826.40px;top:661.00px;font-size:13px;line-height:17px;color:#555;font-weight:400;transform:scaleX(0.9330);transform-origin:0 0;">Finish Sketch</div>
<div class="b" style="left:841px;top:958px;width:237px;height:24px;background:#efefef;"></div>
<svg class="b" style="left:0px;top:0px;" width="1918" height="1038" viewBox="0 0 1918 1038"><path d="M852.600 962.300C850.300 961.600 848.700 965 848.700 969.800C848.700 974.600 850.300 978.200 852.300 977.300C853.600 976.700 854.600 975 855 973" fill="none" stroke="#363a46" stroke-width="1.100"/><path d="M847 967C845 967.600 844 968.700 844 969.900C844 971 845 972 846.800 972.600" fill="none" stroke="#363a46" stroke-width="1.100"/><path d="M850.500 972.800C853 973.200 856 973 858 972C859.600 971.200 860.200 970 859.600 968.800C859 967.700 857.600 966.900 856.500 966.500" fill="#e4eefa" stroke="#363a46" stroke-width="1.100"/><path d="M852 965.600h2.600M853.300 964.300v2.600M855.200 967.600h2.400M856.400 966.400v2.400M850 969.500h2.600M851.300 968.200v2.600" stroke="#2a4a90" stroke-width=".900"/><path d="M865.2 968.200H870.8L868.0 971.800Z" fill="#222"/><path d="M877.500 966.800H892.500V977H877.500Z" fill="#f6f6f6" stroke="#363a46" stroke-width="1.200"/><rect x="880.500" y="969.800" width="9" height="4" fill="#aab4cc" stroke="#363a46" stroke-width="1"/><path d="M878 966.500L881.500 963L884 965.200L888.500 963V966.500" fill="none" stroke="#363a46" stroke-width="1.200"/><path d="M903.600 970.200L905.200 969.300L907.600 971.600L906.800 964.600C906.800 963 908.800 963 909 964.400L909.800 968.600L909.900 963.400C910 962 912.200 962 912.300 963.400L912.600 968.400L913.500 963.800C913.700 962.400 915.800 962.600 915.700 964.200L915.200 969.200L916.800 966.200C917.400 965 919.200 965.600 918.800 967.200L917.200 973.400C916.600 976 915 977.600 912.600 977.600C910 977.600 908.600 976.600 907.200 974.800Z" fill="#fff" stroke="#363a46" stroke-width="1" stroke-linejoin="round"/><circle cx="934.200" cy="968.800" r="4.600" fill="#e6f0f0" stroke="#363a46" stroke-width="1.200"/><path d="M937.500 972.200L941.300 976" stroke="#363a46" stroke-width="2.200" stroke-linecap="round"/><path d="M940.500 965h4.600M942.800 962.700v4.600M940.500 969.300h4.600" stroke="#363a46" stroke-width="1"/><rect x="955.300" y="962.300" width="15.200" height="15.200" fill="none" stroke="#363a46" stroke-width="1" stroke-dasharray="2.500 1.500"/><circle cx="961.700" cy="968.500" r="6" fill="#e0ecec" stroke="#363a46" stroke-width="1.200"/><path d="M966 972.500L970 976.500" stroke="#363a46" stroke-width="2.400" stroke-linecap="round"/><path d="M976.4 968.200H982.0L979.2 971.800Z" fill="#222"/><rect x="988.700" y="962.700" width="15" height="11" rx="1" fill="#f4f4f4" stroke="#363a46" stroke-width="1.200"/><rect x="990.700" y="964.700" width="11" height="7" fill="#8fb4e6"/><path d="M994.500 974V976H992.500V977.300H1000V976H998V974" fill="#888" stroke="#363a46" stroke-width=".600"/><path d="M1006.4 968.200H1012.0L1009.2 971.800Z" fill="#222"/><rect x="1019.200" y="962.400" width="15.600" height="15" fill="#fff" stroke="#5a5a5a" stroke-width="1"/><path d="M1022.3 962.400V977.400M1025.4 962.400V977.400M1028.6 962.400V977.400M1031.7 962.400V977.400M1019.200 965.4H1034.800M1019.200 968.4H1034.800M1019.200 971.4H1034.800M1019.200 974.4H1034.800" stroke="#6a6a6a" stroke-width="1.100"/><path d="M1037.3 968.200H1042.9L1040.1 971.800Z" fill="#222"/><rect x="1050.5" y="963.2" width="6.400" height="6.200" rx=".800" fill="#8fb4e6" stroke="#2c4a80" stroke-width="1.100"/><rect x="1058.3" y="963.2" width="6.400" height="6.200" rx=".800" fill="#8fb4e6" stroke="#2c4a80" stroke-width="1.100"/><rect x="1050.5" y="970.7" width="6.400" height="6.200" rx=".800" fill="#8fb4e6" stroke="#2c4a80" stroke-width="1.100"/><rect x="1058.3" y="970.7" width="6.400" height="6.200" rx=".800" fill="#8fb4e6" stroke="#2c4a80" stroke-width="1.100"/><path d="M1068.3 968.200H1073.9L1071.1 971.800Z" fill="#222"/></svg>
<div class="b" style="left:4px;top:957px;width:300px;height:25px;background:#f1f1f1;border:1px solid #c3c3c3;border-top-color:#e4e4e4;"></div>
<div class="t" style="left:29.70px;top:961.69px;font-size:11px;line-height:15px;color:#505050;font-weight:400;transform:scaleX(0.8713);transform-origin:0 0;">COMMENTS</div>
<svg class="b" style="left:0px;top:0px;" width="1918" height="1038" viewBox="0 0 1918 1038"><circle cx="287.300" cy="969.700" r="4.600" fill="#1e1e1e"/><path d="M284.800 969.700h5M287.300 967.200v5" stroke="#f1f1f1" stroke-width="1.300"/><path d="M299.500 964.500V975M301.800 966V973.500" stroke="#555" stroke-width="1"/><rect x="10.800" y="1003.700" width="2" height="14" fill="#3f3f3f"/><path d="M23 1003.700V1017.700L13 1010.700Z" fill="#3f3f3f"/><path d="M45 1004.200V1017.200L35.500 1010.700Z" fill="#3f3f3f"/><rect x="46" y="1007.500" width="2.300" height="6.400" fill="#3f3f3f"/><path d="M61 1003.300V1018.300L73 1010.800Z" fill="#3f3f3f"/><rect x="84.800" y="1007.500" width="2.300" height="6.400" fill="#3f3f3f"/><path d="M88.200 1004.200V1017.200L97.700 1010.700Z" fill="#3f3f3f"/><path d="M111 1003.700V1017.700L121 1010.700Z" fill="#3f3f3f"/><rect x="121.200" y="1003.700" width="2" height="14" fill="#3f3f3f"/><defs><linearGradient id="gApp" x1="0" y1="0" x2="1" y2="1"><stop offset="0" stop-color="#e0a264"/><stop offset="1" stop-color="#ee7c4c"/></linearGradient></defs><rect x="147.0" y="1003" width="14" height="14" fill="#5fb2f2"/><path d="M147.0 1013L151.0 1008.500L154.5 1012L157.0 1010L161.0 1013.500V1017H147.0Z" fill="#3a8ed2"/><circle cx="157.4" cy="1007" r="2" fill="#e8f6ff"/><rect x="147.0" y="1003" width="14" height="14" fill="none" stroke="#3f97dc" stroke-width=".600"/><rect x="171.0" y="1003" width="14" height="14" fill="#5fb2f2"/><path d="M171.0 1013L175.0 1008.500L178.5 1012L181.0 1010L185.0 1013.500V1017H171.0Z" fill="#3a8ed2"/><circle cx="181.4" cy="1007" r="2" fill="#e8f6ff"/><rect x="171.0" y="1003" width="14" height="14" fill="none" stroke="#3f97dc" stroke-width=".600"/><rect x="194.5" y="1003.400" width="13.200" height="12.800" fill="none" stroke="#333" stroke-width="1.100" stroke-dasharray="8.400 2.400" stroke-dashoffset="-2.400"/><rect x="193.3" y="1002.2" width="2.400" height="2.400" fill="#2b7fc6"/><rect x="206.5" y="1002.2" width="2.400" height="2.400" fill="#2b7fc6"/><rect x="193.3" y="1015.0" width="2.400" height="2.400" fill="#2b7fc6"/><path d="M208.2 1010.300L210.2 1012.300L205.0 1017.500L202.1 1018.200L203.0 1015.500Z" fill="#f3b648"/><path d="M209.5 1009L211.5 1011L210.0 1012.500L208.0 1010.500Z" fill="#e8474c"/><path d="M201.9 1018.200L204.3 1017.500L202.9 1016.500Z" fill="#333"/><path d="M218.0 1014.200H227.5L230.0 1012V1016L227.5 1017.800H218.0Z" fill="#c4d4e2"/><path d="M218.0 1004.500L220.5 1002H230.0V1012.500L227.5 1015H218.0Z" fill="#4f9fe0"/><path d="M218.0 1004.500L220.5 1002H230.0L227.5 1004.500Z" fill="#7cc0f4"/><path d="M227.5 1004.500L230.0 1002V1012.500L227.5 1015Z" fill="#3a86c8"/><path d="M232.5 1014.600V1004.500" stroke="#222" stroke-width="1.300"/><path d="M232.5 1002.800L234.3 1006.200H230.7Z" fill="#222"/><rect x="242.5" y="1003.400" width="13.200" height="12.800" fill="none" stroke="#333" stroke-width="1.100" stroke-dasharray="8.400 2.400" stroke-dashoffset="-2.400"/><rect x="241.3" y="1002.2" width="2.400" height="2.400" fill="#2b7fc6"/><rect x="254.5" y="1002.2" width="2.400" height="2.400" fill="#2b7fc6"/><rect x="241.3" y="1015.0" width="2.400" height="2.400" fill="#2b7fc6"/><path d="M256.2 1010.300L258.2 1012.300L253.0 1017.500L250.1 1018.200L251.0 1015.500Z" fill="#f3b648"/><path d="M257.5 1009L259.5 1011L258.0 1012.500L256.0 1010.500Z" fill="#e8474c"/><path d="M249.9 1018.200L252.3 1017.500L250.9 1016.500Z" fill="#333"/><path d="M266.0 1014.200H275.5L278.0 1012V1016L275.5 1017.800H266.0Z" fill="#c4d4e2"/><path d="M266.0 1004.500L268.5 1002H278.0V1012.500L275.5 1015H266.0Z" fill="#4f9fe0"/><path d="M266.0 1004.500L268.5 1002H278.0L275.5 1004.500Z" fill="#7cc0f4"/><path d="M275.5 1004.500L278.0 1002V1012.500L275.5 1015Z" fill="#3a86c8"/><path d="M280.5 1014.600V1004.500" stroke="#222" stroke-width="1.300"/><path d="M280.5 1002.800L282.3 1006.200H278.7Z" fill="#222"/><path d="M291.0 1016.400H296.5V1005Z" fill="#fff" stroke="#333" stroke-width="1.100"/><path d="M298.5 1003.800V1016.900H304.9Z" fill="#4f9fe0"/><rect x="314.5" y="1003.400" width="13.200" height="12.800" fill="none" stroke="#333" stroke-width="1.100" stroke-dasharray="8.400 2.400" stroke-dashoffset="-2.400"/><rect x="313.3" y="1002.2" width="2.400" height="2.400" fill="#2b7fc6"/><rect x="326.5" y="1002.2" width="2.400" height="2.400" fill="#2b7fc6"/><rect x="313.3" y="1015.0" width="2.400" height="2.400" fill="#2b7fc6"/><path d="M328.2 1010.300L330.2 1012.300L325.0 1017.500L322.1 1018.200L323.0 1015.500Z" fill="#f3b648"/><path d="M329.5 1009L331.5 1011L330.0 1012.500L328.0 1010.500Z" fill="#e8474c"/><path d="M321.9 1018.200L324.3 1017.500L322.9 1016.500Z" fill="#333"/><path d="M338.0 1014.200H347.5L350.0 1012V1016L347.5 1017.800H338.0Z" fill="#c4d4e2"/><path d="M338.0 1004.500L340.5 1002H350.0V1012.500L347.5 1015H338.0Z" fill="#4f9fe0"/><path d="M338.0 1004.500L340.5 1002H350.0L347.5 1004.500Z" fill="#7cc0f4"/><path d="M347.5 1004.500L350.0 1002V1012.500L347.5 1015Z" fill="#3a86c8"/><path d="M352.5 1014.600V1004.500" stroke="#222" stroke-width="1.300"/><path d="M352.5 1002.800L354.3 1006.200H350.7Z" fill="#222"/><path d="M362.0 1014.200H371.5L374.0 1012V1016L371.5 1017.800H362.0Z" fill="#c4d4e2"/><path d="M362.0 1004.500L364.5 1002H374.0V1012.500L371.5 1015H362.0Z" fill="#4f9fe0"/><path d="M362.0 1004.500L364.5 1002H374.0L371.5 1004.500Z" fill="#7cc0f4"/><path d="M371.5 1004.500L374.0 1002V1012.500L371.5 1015Z" fill="#3a86c8"/><path d="M376.5 1014.600V1004.500" stroke="#222" stroke-width="1.300"/><path d="M376.5 1002.800L378.3 1006.200H374.7Z" fill="#222"/><path d="M387.0 1016.400H392.5V1005Z" fill="#fff" stroke="#333" stroke-width="1.100"/><path d="M394.5 1003.800V1016.900H400.9Z" fill="#4f9fe0"/><rect x="410.5" y="1003.400" width="13.200" height="12.800" fill="none" stroke="#333" stroke-width="1.100" stroke-dasharray="8.400 2.400" stroke-dashoffset="-2.400"/><rect x="409.3" y="1002.2" width="2.400" height="2.400" fill="#2b7fc6"/><rect x="422.5" y="1002.2" width="2.400" height="2.400" fill="#2b7fc6"/><rect x="409.3" y="1015.0" width="2.400" height="2.400" fill="#2b7fc6"/><path d="M424.2 1010.300L426.2 1012.300L421.0 1017.500L418.1 1018.200L419.0 1015.500Z" fill="#f3b648"/><path d="M425.5 1009L427.5 1011L426.0 1012.500L424.0 1010.500Z" fill="#e8474c"/><path d="M417.9 1018.200L420.3 1017.500L418.9 1016.500Z" fill="#333"/><path d="M434.0 1014.200H443.5L446.0 1012V1016L443.5 1017.800H434.0Z" fill="#c4d4e2"/><path d="M434.0 1004.500L436.5 1002H446.0V1012.500L443.5 1015H434.0Z" fill="#4f9fe0"/><path d="M434.0 1004.500L436.5 1002H446.0L443.5 1004.500Z" fill="#7cc0f4"/><path d="M443.5 1004.500L446.0 1002V1012.500L443.5 1015Z" fill="#3a86c8"/><path d="M448.5 1014.600V1004.500" stroke="#222" stroke-width="1.300"/><path d="M448.5 1002.800L450.3 1006.200H446.7Z" fill="#222"/><path d="M458.0 1014.200H467.5L470.0 1012V1016L467.5 1017.800H458.0Z" fill="#c4d4e2"/><path d="M458.0 1004.500L460.5 1002H470.0V1012.500L467.5 1015H458.0Z" fill="#4f9fe0"/><path d="M458.0 1004.500L460.5 1002H470.0L467.5 1004.500Z" fill="#7cc0f4"/><path d="M467.5 1004.500L470.0 1002V1012.500L467.5 1015Z" fill="#3a86c8"/><path d="M472.5 1014.600V1004.500" stroke="#222" stroke-width="1.300"/><path d="M472.5 1002.800L474.3 1006.200H470.7Z" fill="#222"/><rect x="482.5" y="1003.400" width="13.200" height="12.800" fill="none" stroke="#333" stroke-width="1.100" stroke-dasharray="8.400 2.400" stroke-dashoffset="-2.400"/><rect x="481.3" y="1002.2" width="2.400" height="2.400" fill="#2b7fc6"/><rect x="494.5" y="1002.2" width="2.400" height="2.400" fill="#2b7fc6"/><rect x="481.3" y="1015.0" width="2.400" height="2.400" fill="#2b7fc6"/><path d="M496.2 1010.300L498.2 1012.300L493.0 1017.500L490.1 1018.200L491.0 1015.500Z" fill="#f3b648"/><path d="M497.5 1009L499.5 1011L498.0 1012.500L496.0 1010.500Z" fill="#e8474c"/><path d="M489.9 1018.200L492.3 1017.500L490.9 1016.500Z" fill="#333"/><path d="M506.0 1014.200H515.5L518.0 1012V1016L515.5 1017.800H506.0Z" fill="#c4d4e2"/><path d="M506.0 1004.500L508.5 1002H518.0V1012.500L515.5 1015H506.0Z" fill="#4f9fe0"/><path d="M506.0 1004.500L508.5 1002H518.0L515.5 1004.500Z" fill="#7cc0f4"/><path d="M515.5 1004.500L518.0 1002V1012.500L515.5 1015Z" fill="#3a86c8"/><path d="M520.5 1014.600V1004.500" stroke="#222" stroke-width="1.300"/><path d="M520.5 1002.800L522.3 1006.200H518.7Z" fill="#222"/><path d="M530.0 1014.200H539.5L542.0 1012V1016L539.5 1017.800H530.0Z" fill="#c4d4e2"/><path d="M530.0 1004.500L532.5 1002H542.0V1012.500L539.5 1015H530.0Z" fill="#4f9fe0"/><path d="M530.0 1004.500L532.5 1002H542.0L539.5 1004.500Z" fill="#7cc0f4"/><path d="M539.5 1004.500L542.0 1002V1012.500L539.5 1015Z" fill="#3a86c8"/><path d="M544.5 1014.600V1004.500" stroke="#222" stroke-width="1.300"/><path d="M544.5 1002.800L546.3 1006.200H542.7Z" fill="#222"/><path d="M555.0 1016.400H560.5V1005Z" fill="#fff" stroke="#333" stroke-width="1.100"/><path d="M562.5 1003.800V1016.900H568.9Z" fill="#4f9fe0"/><path d="M579.0 1016.400H584.5V1005Z" fill="#fff" stroke="#333" stroke-width="1.100"/><path d="M586.5 1003.800V1016.900H592.9Z" fill="#4f9fe0"/><path d="M602.4 1010.600V1017.500H607.7" fill="#e2e2e2" stroke="#333" stroke-width="1.200"/><path d="M608.6 1002L617.5 1010.600L612.2 1016.400L602.9 1007.300Z" fill="url(#gApp)"/><path d="M609.4 1006.600L613.3 1010.400L611.2 1012.600L607.3 1008.800Z" fill="#eef0c0"/><path d="M609.1 1008L611.7 1010.600" stroke="#3fa050" stroke-width="1.300" stroke-dasharray="1 .700"/><rect x="626.5" y="1003.400" width="13.200" height="12.800" fill="none" stroke="#333" stroke-width="1.100" stroke-dasharray="8.400 2.400" stroke-dashoffset="-2.400"/><rect x="625.3" y="1002.2" width="2.400" height="2.400" fill="#2b7fc6"/><rect x="638.5" y="1002.2" width="2.400" height="2.400" fill="#2b7fc6"/><rect x="625.3" y="1015.0" width="2.400" height="2.400" fill="#2b7fc6"/><path d="M640.2 1010.300L642.2 1012.300L637.0 1017.500L634.1 1018.200L635.0 1015.500Z" fill="#f3b648"/><path d="M641.5 1009L643.5 1011L642.0 1012.500L640.0 1010.500Z" fill="#e8474c"/><path d="M633.9 1018.200L636.3 1017.500L634.9 1016.500Z" fill="#333"/><path d="M650.0 1014.200H659.5L662.0 1012V1016L659.5 1017.800H650.0Z" fill="#c4d4e2"/><path d="M650.0 1004.500L652.5 1002H662.0V1012.500L659.5 1015H650.0Z" fill="#4f9fe0"/><path d="M650.0 1004.500L652.5 1002H662.0L659.5 1004.500Z" fill="#7cc0f4"/><path d="M659.5 1004.500L662.0 1002V1012.500L659.5 1015Z" fill="#3a86c8"/><path d="M664.5 1014.600V1004.500" stroke="#222" stroke-width="1.300"/><path d="M664.5 1002.800L666.3 1006.200H662.7Z" fill="#222"/><rect x="674.5" y="1003.400" width="13.200" height="12.800" fill="none" stroke="#333" stroke-width="1.100" stroke-dasharray="8.400 2.400" stroke-dashoffset="-2.400"/><rect x="673.3" y="1002.2" width="2.400" height="2.400" fill="#2b7fc6"/><rect x="686.5" y="1002.2" width="2.400" height="2.400" fill="#2b7fc6"/><rect x="673.3" y="1015.0" width="2.400" height="2.400" fill="#2b7fc6"/><path d="M688.2 1010.300L690.2 1012.300L685.0 1017.500L682.1 1018.200L683.0 1015.500Z" fill="#f3b648"/><path d="M689.5 1009L691.5 1011L690.0 1012.500L688.0 1010.500Z" fill="#e8474c"/><path d="M681.9 1018.200L684.3 1017.500L682.9 1016.500Z" fill="#333"/><path d="M698.0 1014.200H707.5L710.0 1012V1016L707.5 1017.800H698.0Z" fill="#c4d4e2"/><path d="M698.0 1004.500L700.5 1002H710.0V1012.500L707.5 1015H698.0Z" fill="#4f9fe0"/><path d="M698.0 1004.500L700.5 1002H710.0L707.5 1004.500Z" fill="#7cc0f4"/><path d="M707.5 1004.500L710.0 1002V1012.500L707.5 1015Z" fill="#3a86c8"/><path d="M712.5 1014.600V1004.500" stroke="#222" stroke-width="1.300"/><path d="M712.5 1002.800L714.3 1006.200H710.7Z" fill="#222"/><path d="M723.0 1016.400H728.5V1005Z" fill="#fff" stroke="#333" stroke-width="1.100"/><path d="M730.5 1003.800V1016.900H736.9Z" fill="#4f9fe0"/><path d="M746.4 1010.600V1017.500H751.7" fill="#e2e2e2" stroke="#333" stroke-width="1.200"/><path d="M752.6 1002L761.5 1010.600L756.2 1016.400L746.9 1007.300Z" fill="url(#gApp)"/><path d="M753.4 1006.600L757.3 1010.400L755.2 1012.600L751.3 1008.800Z" fill="#eef0c0"/><path d="M753.1 1008L755.7 1010.600" stroke="#3fa050" stroke-width="1.300" stroke-dasharray="1 .700"/><rect x="770.5" y="1003.400" width="13.200" height="12.800" fill="none" stroke="#333" stroke-width="1.100" stroke-dasharray="8.400 2.400" stroke-dashoffset="-2.400"/><rect x="769.3" y="1002.2" width="2.400" height="2.400" fill="#2b7fc6"/><rect x="782.5" y="1002.2" width="2.400" height="2.400" fill="#2b7fc6"/><rect x="769.3" y="1015.0" width="2.400" height="2.400" fill="#2b7fc6"/><path d="M784.2 1010.300L786.2 1012.300L781.0 1017.500L778.1 1018.200L779.0 1015.500Z" fill="#f3b648"/><path d="M785.5 1009L787.5 1011L786.0 1012.500L784.0 1010.500Z" fill="#e8474c"/><path d="M777.9 1018.200L780.3 1017.500L778.9 1016.500Z" fill="#333"/><rect x="794.5" y="1003.400" width="13.200" height="12.800" fill="none" stroke="#333" stroke-width="1.100" stroke-dasharray="8.400 2.400" stroke-dashoffset="-2.400"/><rect x="793.3" y="1002.2" width="2.400" height="2.400" fill="#2b7fc6"/><rect x="806.5" y="1002.2" width="2.400" height="2.400" fill="#2b7fc6"/><rect x="793.3" y="1015.0" width="2.400" height="2.400" fill="#2b7fc6"/><path d="M808.2 1010.300L810.2 1012.300L805.0 1017.500L802.1 1018.200L803.0 1015.500Z" fill="#f3b648"/><path d="M809.5 1009L811.5 1011L810.0 1012.500L808.0 1010.500Z" fill="#e8474c"/><path d="M801.9 1018.200L804.3 1017.500L802.9 1016.500Z" fill="#333"/><path d="M818.0 1002.200H834.0V1010L830.5 1013.500H821.5L818.0 1010Z" fill="#4f9fe0"/><path d="M819.2 1003H832.8L829.0 1010.500H823.0Z" fill="#7cc0f4"/><circle cx="826.0" cy="1013.800" r="3.300" fill="#fff" stroke="#333" stroke-width="1.100"/><path d="M842.0 1002.200H858.0V1010L854.5 1013.500H845.5L842.0 1010Z" fill="#4f9fe0"/><path d="M843.2 1003H856.8L853.0 1010.500H847.0Z" fill="#7cc0f4"/><circle cx="850.0" cy="1013.800" r="3.300" fill="#fff" stroke="#333" stroke-width="1.100"/><path d="M867.0 1016.400H872.5V1005Z" fill="#fff" stroke="#333" stroke-width="1.100"/><path d="M874.5 1003.800V1016.900H880.9Z" fill="#4f9fe0"/><rect x="890.5" y="1003.400" width="13.200" height="12.800" fill="none" stroke="#333" stroke-width="1.100" stroke-dasharray="8.400 2.400" stroke-dashoffset="-2.400"/><rect x="889.3" y="1002.2" width="2.400" height="2.400" fill="#2b7fc6"/><rect x="902.5" y="1002.2" width="2.400" height="2.400" fill="#2b7fc6"/><rect x="889.3" y="1015.0" width="2.400" height="2.400" fill="#2b7fc6"/><path d="M904.2 1010.300L906.2 1012.300L901.0 1017.500L898.1 1018.200L899.0 1015.500Z" fill="#f3b648"/><path d="M905.5 1009L907.5 1011L906.0 1012.500L904.0 1010.500Z" fill="#e8474c"/><path d="M897.9 1018.200L900.3 1017.500L898.9 1016.500Z" fill="#333"/><path d="M914.0 1014.200H923.5L926.0 1012V1016L923.5 1017.800H914.0Z" fill="#c4d4e2"/><path d="M914.0 1004.500L916.5 1002H926.0V1012.500L923.5 1015H914.0Z" fill="#4f9fe0"/><path d="M914.0 1004.500L916.5 1002H926.0L923.5 1004.500Z" fill="#7cc0f4"/><path d="M923.5 1004.500L926.0 1002V1012.500L923.5 1015Z" fill="#3a86c8"/><path d="M928.5 1014.600V1004.500" stroke="#222" stroke-width="1.300"/><path d="M928.5 1002.800L930.3 1006.200H926.7Z" fill="#222"/><path d="M939.0 1016.400H944.5V1005Z" fill="#fff" stroke="#333" stroke-width="1.100"/><path d="M946.5 1003.800V1016.900H952.9Z" fill="#4f9fe0"/><path d="M962.2 1017.300V1006L965.9 1002.300H969.7A8 8 0 0 1 977.7 1010.300V1014L974.4 1017.300Z" fill="#d6d6d6" stroke="#444" stroke-width="1.100"/><path d="M969.7 1002.600A8 8 0 0 1 977.5 1010.300L974.2 1011A9 9 0 0 0 967.2 1004Z" fill="#4f9fe0"/><rect x="986.5" y="1003.400" width="13.200" height="12.800" fill="none" stroke="#333" stroke-width="1.100" stroke-dasharray="8.400 2.400" stroke-dashoffset="-2.400"/><rect x="985.3" y="1002.2" width="2.400" height="2.400" fill="#2b7fc6"/><rect x="998.5" y="1002.2" width="2.400" height="2.400" fill="#2b7fc6"/><rect x="985.3" y="1015.0" width="2.400" height="2.400" fill="#2b7fc6"/><path d="M1000.2 1010.300L1002.2 1012.300L997.0 1017.500L994.1 1018.200L995.0 1015.500Z" fill="#f3b648"/><path d="M1001.5 1009L1003.5 1011L1002.0 1012.500L1000.0 1010.500Z" fill="#e8474c"/><path d="M993.9 1018.200L996.3 1017.500L994.9 1016.500Z" fill="#333"/><path d="M154.200 1026.800H994.400M154.3 1021.600V1026.800M178.3 1021.600V1026.800M202.3 1021.600V1026.800M226.3 1021.600V1026.800M250.3 1021.600V1026.800M274.3 1021.600V1026.800M298.3 1021.600V1026.800M322.3 1021.600V1026.800M346.3 1021.600V1026.800M370.3 1021.600V1026.800M394.3 1021.600V1026.800M418.3 1021.600V1026.800M442.3 1021.600V1026.800M466.3 1021.600V1026.800M490.3 1021.600V1026.800M514.3 1021.600V1026.800M538.3 1021.600V1026.800M562.3 1021.600V1026.800M586.3 1021.600V1026.800M610.3 1021.600V1026.800M634.3 1021.600V1026.800M658.3 1021.600V1026.800M682.3 1021.600V1026.800M706.3 1021.600V1026.800M730.3 1021.600V1026.800M754.3 1021.600V1026.800M778.3 1021.600V1026.800M802.3 1021.600V1026.800M826.3 1021.600V1026.800M850.3 1021.600V1026.800M874.3 1021.600V1026.800M898.3 1021.600V1026.800M922.3 1021.600V1026.800M946.3 1021.600V1026.800M970.3 1021.600V1026.800M994.3 1021.600V1026.800" fill="none" stroke="#c8c8c8" stroke-width="1.900"/><path d="M1000.300 996.300H1012L1012 998L1007.200 1003.400V1027.600H1005V1003.400L1000.300 998Z" fill="#555"/><rect x="1897.0" y="1002.7" width="3.600" height="4" fill="#8c8c8c" transform="rotate(0 1898.8 1010.7)"/><rect x="1897.0" y="1002.7" width="3.600" height="4" fill="#8c8c8c" transform="rotate(45 1898.8 1010.7)"/><rect x="1897.0" y="1002.7" width="3.600" height="4" fill="#8c8c8c" transform="rotate(90 1898.8 1010.7)"/><rect x="1897.0" y="1002.7" width="3.600" height="4" fill="#8c8c8c" transform="rotate(135 1898.8 1010.7)"/><rect x="1897.0" y="1002.7" width="3.600" height="4" fill="#8c8c8c" transform="rotate(180 1898.8 1010.7)"/><rect x="1897.0" y="1002.7" width="3.600" height="4" fill="#8c8c8c" transform="rotate(225 1898.8 1010.7)"/><rect x="1897.0" y="1002.7" width="3.600" height="4" fill="#8c8c8c" transform="rotate(270 1898.8 1010.7)"/><rect x="1897.0" y="1002.7" width="3.600" height="4" fill="#8c8c8c" transform="rotate(315 1898.8 1010.7)"/><circle cx="1898.8" cy="1010.7" r="4.400" fill="none" stroke="#8c8c8c" stroke-width="3.400"/></svg>
</body></html>
